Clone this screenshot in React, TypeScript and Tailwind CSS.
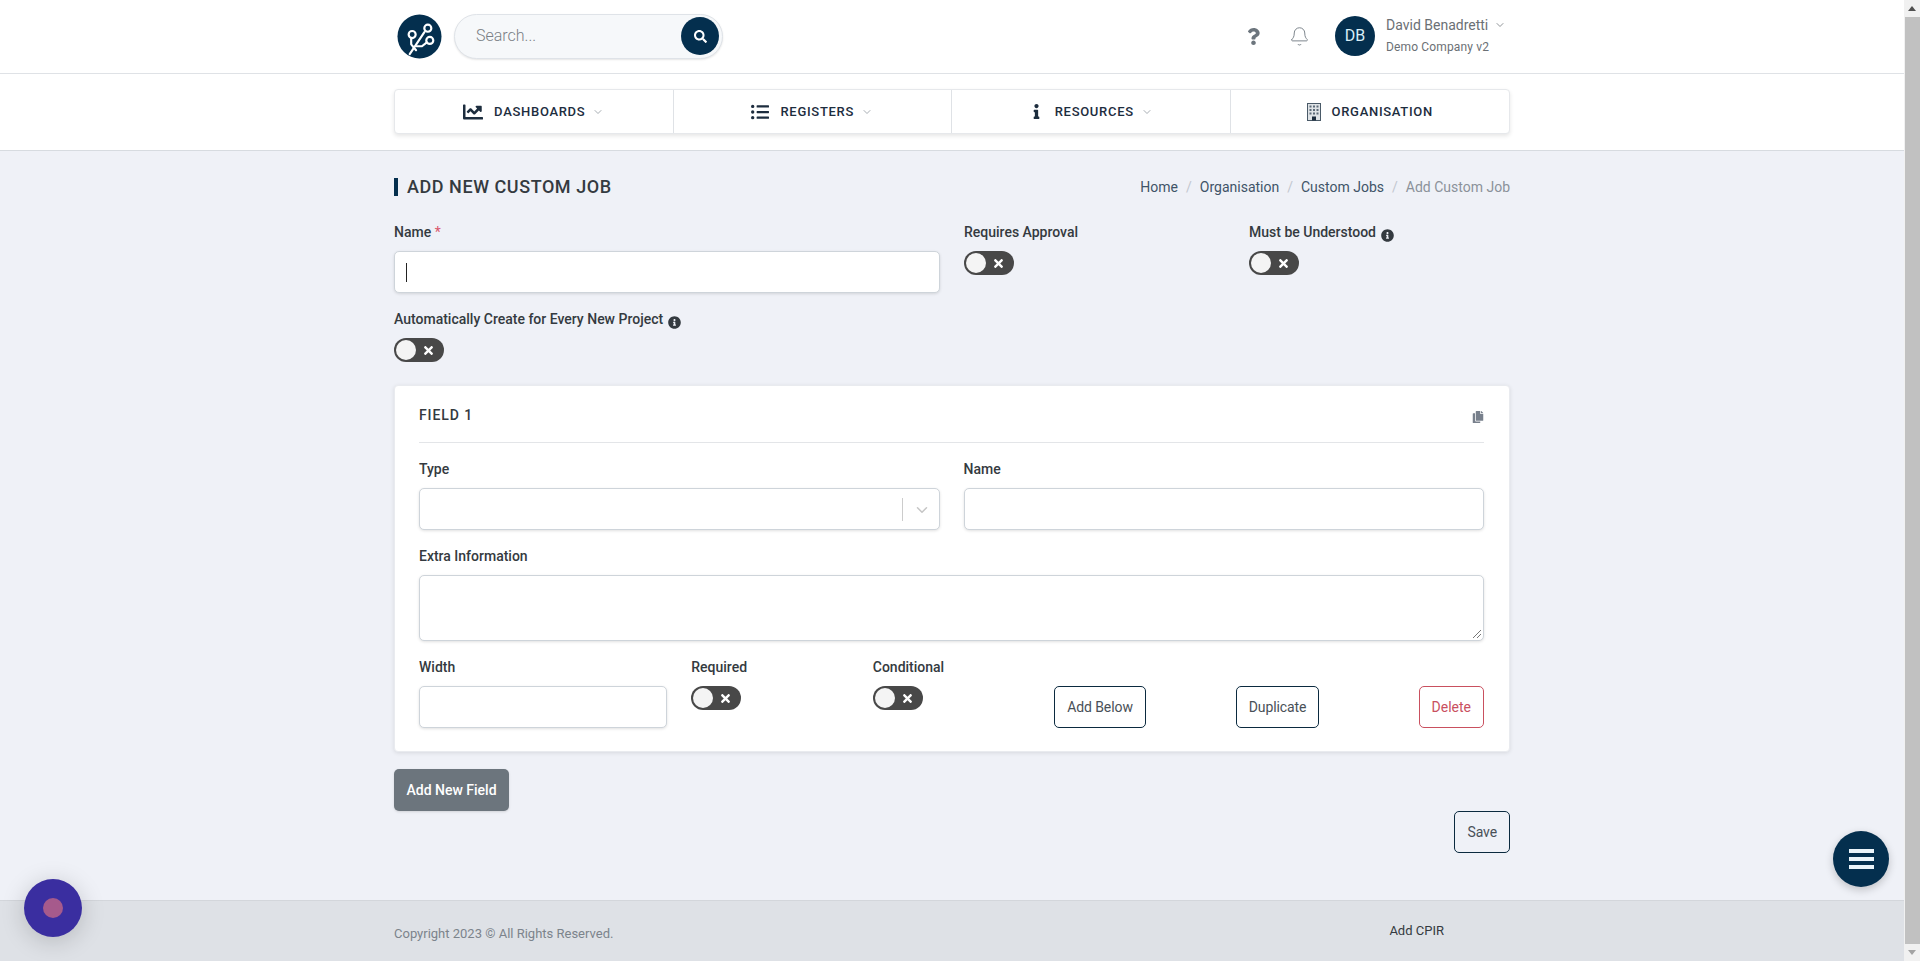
import { Bell, ChevronDown } from "lucide-react";
import {
  FaChartLine,
  FaCopy,
  FaInfo,
  FaInfoCircle,
  FaListUl,
  FaQuestion,
  FaSearch,
  FaTimes,
} from "react-icons/fa";

function Logo() {
  return (
    <svg viewBox="0 0 46 46" className="h-[45px] w-[45px] shrink-0">
      <circle cx="23" cy="23" r="22.5" fill="#042f4e" />
      <g fill="none" stroke="#fff" strokeWidth="2.2" strokeLinecap="round" strokeLinejoin="round">
        <path d="M13 41 L28 18.5" />
        <path d="M14.5 25 V31 L19.5 37" />
        <path d="M30.5 29 L25.5 33 H20" />
        <circle cx="31.5" cy="14.5" r="3.6" />
        <circle cx="15.5" cy="21" r="3.6" />
        <circle cx="33.5" cy="27" r="3.6" />
      </g>
    </svg>
  );
}

function BuildingIcon() {
  return (
    <svg viewBox="0 0 14 18" className="h-[18px] w-[14px]">
      <rect x="0.5" y="0.5" width="13" height="17" fill="#dfe3e6" stroke="#4a5a68" />
      <g fill="#5d6b78">
        <rect x="2.5" y="2.5" width="2" height="2" />
        <rect x="6" y="2.5" width="2" height="2" />
        <rect x="9.5" y="2.5" width="2" height="2" />
        <rect x="2.5" y="6" width="2" height="2" />
        <rect x="6" y="6" width="2" height="2" />
        <rect x="9.5" y="6" width="2" height="2" />
        <rect x="2.5" y="9.5" width="2" height="2" />
        <rect x="6" y="9.5" width="2" height="2" />
        <rect x="9.5" y="9.5" width="2" height="2" />
      </g>
      <rect x="5" y="13.5" width="4" height="4" fill="#1d2d3e" />
    </svg>
  );
}

function Toggle() {
  return (
    <div className="flex h-6 w-[50px] items-center justify-between rounded-full bg-[#484848] pl-[2px] pr-[9px]">
      <span className="h-5 w-5 rounded-full bg-[#f4f4f4]" />
      <FaTimes className="text-[13px] text-white" />
    </div>
  );
}

function Label({ children }: { children: React.ReactNode }) {
  return <div className="h-5 text-sm leading-5 font-medium text-[#343a40]">{children}</div>;
}

function Info() {
  return <FaInfoCircle className="ml-[5px] inline-block translate-y-[2px] text-[13px] text-[#343a40]" />;
}

function Field({ className = "h-[42px]" }: { className?: string }) {
  return (
    <div className={`rounded-[5px] border border-[#ced4da] bg-white shadow-[0_1px_3px_rgba(0,0,0,0.12)] ${className}`} />
  );
}

function OutlineButton({ label, red }: { label: string; red?: boolean }) {
  return (
    <div
      className={
        red
          ? "flex h-[42px] items-center rounded-[5px] border border-[#c9505f] px-3 text-sm text-[#c9505f]"
          : "flex h-[42px] items-center rounded-[5px] border border-[#0b2a3f] px-3 text-sm tracking-[-0.1px] text-[#495057]"
      }
    >
      {label}
    </div>
  );
}

function NavItem({ icon, label, chevron = true }: { icon: React.ReactNode; label: string; chevron?: boolean }) {
  return (
    <div className="flex items-center justify-center border-r border-[#dfe2e6] last:border-r-0">
      {icon}
      <span className="ml-[11px] text-[13px] font-medium tracking-[0.7px] text-[#1d2d3e]">{label}</span>
      {chevron && <ChevronDown className="ml-[7px] h-3 w-3 text-[#8a929a]" strokeWidth={1.5} />}
    </div>
  );
}

function Crumb({ children }: { children: React.ReactNode }) {
  return <span className="text-sm text-[#3f5468]">{children}</span>;
}

function Slash() {
  return <span className="mx-2 text-sm text-[#c2c7cf]">/</span>;
}

function Scrollbar() {
  return (
    <div className="flex h-full w-4 shrink-0 flex-col bg-[#f1f1f1]">
      <div className="flex h-[17px] items-center justify-center">
        <span className="h-0 w-0 border-x-[4px] border-b-[5px] border-x-transparent border-b-[#505050]" />
      </div>
      <div className="ml-px flex-1 bg-[#c1c1c1]" />
      <div className="flex h-[17px] items-center justify-center">
        <span className="h-0 w-0 border-x-[4px] border-t-[5px] border-x-transparent border-t-[#a3a3a3]" />
      </div>
    </div>
  );
}

export default function App() {
  return (
    <div className="flex h-screen overflow-hidden bg-[#eff1f7] font-['Roboto',sans-serif]">
      <div className="relative flex h-full min-w-0 flex-1 flex-col">
        {/* Header */}
        <header className="h-[74px] shrink-0 border-b border-[#dfe2e6] bg-white">
          <div className="mx-auto flex h-full w-[1116px] items-center pl-[3px] pb-px">
            <Logo />
            <div className="ml-3 flex h-[45px] w-[269px] items-center justify-between rounded-full border border-[#dfe3e8] bg-[#f6f8fa] pl-[21px] pr-[3px] shadow-[0_1px_2px_rgba(0,0,0,0.1)]">
              <span className="text-base font-light text-[#7a7f85]">Search...</span>
              <span className="flex h-[38px] w-[38px] items-center justify-center rounded-full bg-[#042f4e]">
                <FaSearch className="text-[13px] text-white" />
              </span>
            </div>
            <FaQuestion className="ml-[522px] text-[17px] text-[#6c757d]" />
            <Bell className="ml-[27px] h-[21px] w-[21px] text-[#6c757d]" strokeWidth={1} />
            <div className="ml-[25px] flex h-10 w-10 items-center justify-center rounded-full bg-[#042f4e] text-base text-[#d9eef7]">
              DB
            </div>
            <div className="-mt-[3px] ml-[11px] whitespace-nowrap">
              <div className="flex items-center text-sm leading-5 text-[#6b7075]">
                David Benadretti
                <ChevronDown className="ml-[6px] h-3 w-3" strokeWidth={1.5} />
              </div>
              <div className="mt-1 text-xs leading-4 tracking-[0.15px] text-[#6b7075]">Demo Company v2</div>
            </div>
          </div>
        </header>

        {/* Nav */}
        <div className="flex h-[77px] shrink-0 items-start justify-center border-b border-[#d7dbe0] bg-white pt-[15px]">
          <nav className="grid h-[45px] w-[1116px] grid-cols-4 rounded-[4px] border border-[#e6e8eb] bg-white shadow-[0_2px_4px_rgba(0,0,0,0.1)]">
            <NavItem icon={<FaChartLine className="text-[20px] text-[#1d2d3e]" />} label="DASHBOARDS" />
            <NavItem icon={<FaListUl className="text-lg text-[#1d2d3e]" />} label="REGISTERS" />
            <NavItem icon={<FaInfo className="text-[15px] text-[#1d2d3e]" />} label="RESOURCES" />
            <NavItem icon={<BuildingIcon />} label="ORGANISATION" chevron={false} />
          </nav>
        </div>

        {/* Main */}
        <main className="flex-1">
          <div className="mx-auto w-[1116px] pt-[27px]">
            <div className="flex h-[18px] items-center justify-between">
              <h1 className="border-l-4 border-[#042f4e] pl-[9px] text-lg leading-[18px] font-medium tracking-[0.55px] text-[#343a40]">
                ADD NEW CUSTOM JOB
              </h1>
              <div className="flex items-center">
                <Crumb>Home</Crumb>
                <Slash />
                <Crumb>Organisation</Crumb>
                <Slash />
                <Crumb>Custom Jobs</Crumb>
                <Slash />
                <span className="text-sm text-[#8b919a]">Add Custom Job</span>
              </div>
            </div>

            <div className="mt-[26px] grid grid-cols-12 gap-x-6">
              <div className="col-span-6">
                <Label>
                  Name <span className="font-normal text-[#d9566c]">*</span>
                </Label>
                <div className="relative mt-[9px]">
                  <Field />
                  <span className="absolute top-[12px] left-[12px] h-[19px] w-px bg-[#222]" />
                </div>
              </div>
              <div className="col-span-3">
                <Label>Requires Approval</Label>
                <div className="mt-[9px]">
                  <Toggle />
                </div>
              </div>
              <div className="col-span-3">
                <Label>
                  Must be Understood
                  <Info />
                </Label>
                <div className="mt-[9px]">
                  <Toggle />
                </div>
              </div>
            </div>

            <div className="mt-4">
              <Label>
                Automatically Create for Every New Project
                <Info />
              </Label>
              <div className="mt-[9px]">
                <Toggle />
              </div>
            </div>

            {/* Field card */}
            <section className="mt-[23px] h-[367px] rounded-[4px] border border-[#e9ebef] bg-white pt-[18px] pr-[25px] pl-6 shadow-[0_1px_4px_rgba(0,0,0,0.1)]">
              <div className="flex h-[39px] items-start justify-between border-b border-[#e3e5e8] pt-px">
                <span className="text-sm leading-5 font-medium tracking-[0.9px] text-[#343a40]">FIELD 1</span>
                <FaCopy className="mt-[6px] text-xs text-[#78808c]" />
              </div>

              <div className="mt-4 grid grid-cols-2 gap-x-6">
                <div>
                  <Label>Type</Label>
                  <div className="relative mt-[9px]">
                    <Field />
                    <span className="absolute top-[10px] right-[37px] h-[23px] w-px bg-[#ccc]" />
                    <ChevronDown className="absolute top-[13px] right-[9px] h-[18px] w-[18px] text-[#c6c6c6]" strokeWidth={2} />
                  </div>
                </div>
                <div>
                  <Label>Name</Label>
                  <div className="mt-[9px]">
                    <Field />
                  </div>
                </div>
              </div>

              <div className="mt-4">
                <Label>Extra Information</Label>
                <div className="relative mt-[9px]">
                  <Field className="h-[66px]" />
                  <svg viewBox="0 0 10 10" className="absolute right-[2px] bottom-[2px] h-[10px] w-[10px] text-[#777]">
                    <path d="M9 1 L1 9 M9 5 L5 9" stroke="currentColor" strokeWidth="1" />
                  </svg>
                </div>
              </div>

              <div className="mt-4 grid grid-cols-12 gap-x-6">
                <div className="col-span-3">
                  <Label>Width</Label>
                  <div className="mt-[9px]">
                    <Field />
                  </div>
                </div>
                <div className="col-span-2">
                  <Label>Required</Label>
                  <div className="mt-[9px]">
                    <Toggle />
                  </div>
                </div>
                <div className="col-span-2">
                  <Label>Conditional</Label>
                  <div className="mt-[9px]">
                    <Toggle />
                  </div>
                </div>
                <div className="col-span-2 flex items-start pt-[29px]">
                  <OutlineButton label="Add Below" />
                </div>
                <div className="col-span-2 flex items-start pt-[29px]">
                  <OutlineButton label="Duplicate" />
                </div>
                <div className="col-span-1 flex items-start justify-end pt-[29px]">
                  <OutlineButton label="Delete" red />
                </div>
              </div>
            </section>

            <div className="mt-[17px] flex h-[42px] w-[115px] items-center justify-center rounded-[5px] bg-[#6c757d] text-sm font-medium text-white shadow-sm">
              Add New Field
            </div>

            <div className="flex justify-end">
              <OutlineButton label="Save" />
            </div>
          </div>
        </main>

        {/* Footer */}
        <footer className="h-[61px] shrink-0 border-t border-[#d3d6db] bg-[#dee1e6]">
          <div className="mx-auto flex w-[1116px] items-start pt-[25px]">
            <span className="text-[13px] leading-4 text-[#7c848c]">Copyright 2023 © All Rights Reserved.</span>
            <span className="ml-[776px] -mt-[3px] text-[13px] leading-4 text-[#343a40]">Add CPIR</span>
          </div>
        </footer>

        {/* Floating buttons */}
        <div className="absolute bottom-[24px] left-[24px] flex h-[58px] w-[58px] items-center justify-center rounded-full bg-[#3a2ea0] shadow-[0_4px_24px_rgba(0,0,0,0.18)]">
          <span className="h-5 w-5 rounded-full bg-[#a65a8c]" />
        </div>
        <div className="absolute right-[15px] bottom-[74px] flex h-14 w-14 flex-col items-center justify-center gap-[3.5px] rounded-full bg-[#042f4e] shadow-[0_3px_8px_rgba(0,0,0,0.2)]">
          <span className="h-[4.5px] w-[25px] bg-[#eaf4fa]" />
          <span className="h-[4.5px] w-[25px] bg-[#eaf4fa]" />
          <span className="h-[4.5px] w-[25px] bg-[#eaf4fa]" />
        </div>
      </div>
      <Scrollbar />
    </div>
  );
}
